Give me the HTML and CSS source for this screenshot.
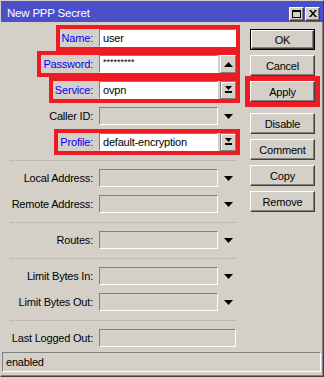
FILE: index.html
```html
<!DOCTYPE html>
<html>
<head>
<meta charset="utf-8">
<link rel="stylesheet" href="styles.css">
</head>
<body>
<div class="window">
  <div class="titlebar">
    <span class="title">New PPP Secret</span>
    <div class="tb-btns">
      <span class="tb-btn"><svg width="9" height="8" viewBox="0 0 9 8"><rect x="0.5" y="0.5" width="8" height="7" fill="none" stroke="#000"/><rect x="0" y="0" width="9" height="2" fill="#000"/></svg></span>
      <span class="tb-btn"><svg width="8" height="7" viewBox="0 0 8 7"><path d="M0 0h2l2 2.5 2-2.5h2l-3 3.5 3 3.5h-2l-2-2.5-2 2.5h-2l3-3.5z" fill="#000"/></svg></span>
    </div>
  </div>
  <div class="main">
    <div class="form">
      <div class="row"><div class="box hl"><span class="lbl blue">Name:</span><div class="input white full">user</div></div></div>
      <div class="row"><div class="box hl"><span class="lbl blue">Password:</span><div class="field"><div class="input white pw">*********</div><span class="sbtn"><svg width="9" height="5" viewBox="0 0 9 5"><polygon points="4.5,0 9,5 0,5" fill="#000"/></svg></span></div></div></div>
      <div class="row"><div class="box hl"><span class="lbl blue">Service:</span><div class="field"><div class="input white">ovpn</div><span class="sbtn dark"><svg width="7" height="8" viewBox="0 0 7 8"><polygon points="0,0 7,0 3.5,4" fill="#000"/><rect x="0" y="5" width="7" height="2" fill="#000"/></svg></span></div></div></div>
      <div class="row"><div class="box"><span class="lbl">Caller ID:</span><div class="field"><div class="input"></div><span class="arrow"><svg width="9" height="5" viewBox="0 0 9 5"><polygon points="0,0 9,0 4.5,5" fill="#000"/></svg></span></div></div></div>
      <div class="row"><div class="box hl"><span class="lbl blue">Profile:</span><div class="field"><div class="input white">default-encryption</div><span class="sbtn dark"><svg width="7" height="8" viewBox="0 0 7 8"><polygon points="0,0 7,0 3.5,4" fill="#000"/><rect x="0" y="5" width="7" height="2" fill="#000"/></svg></span></div></div></div>
      <div class="sep"></div>
      <div class="row"><div class="box"><span class="lbl">Local Address:</span><div class="field"><div class="input"></div><span class="arrow"><svg width="9" height="5" viewBox="0 0 9 5"><polygon points="0,0 9,0 4.5,5" fill="#000"/></svg></span></div></div></div>
      <div class="row"><div class="box"><span class="lbl">Remote Address:</span><div class="field"><div class="input"></div><span class="arrow"><svg width="9" height="5" viewBox="0 0 9 5"><polygon points="0,0 9,0 4.5,5" fill="#000"/></svg></span></div></div></div>
      <div class="sep"></div>
      <div class="row"><div class="box"><span class="lbl">Routes:</span><div class="field"><div class="input"></div><span class="arrow"><svg width="9" height="5" viewBox="0 0 9 5"><polygon points="0,0 9,0 4.5,5" fill="#000"/></svg></span></div></div></div>
      <div class="sep"></div>
      <div class="row"><div class="box"><span class="lbl">Limit Bytes In:</span><div class="field"><div class="input"></div><span class="arrow"><svg width="9" height="5" viewBox="0 0 9 5"><polygon points="0,0 9,0 4.5,5" fill="#000"/></svg></span></div></div></div>
      <div class="row"><div class="box"><span class="lbl">Limit Bytes Out:</span><div class="field"><div class="input"></div><span class="arrow"><svg width="9" height="5" viewBox="0 0 9 5"><polygon points="0,0 9,0 4.5,5" fill="#000"/></svg></span></div></div></div>
      <div class="sep"></div>
      <div class="row"><div class="box"><span class="lbl">Last Logged Out:</span><div class="input full"></div></div></div>
    </div>
    <div class="buttons">
      <div class="default"><button class="btn">OK</button></div>
      <button class="btn">Cancel</button>
      <div class="mark"><button class="btn">Apply</button></div>
      <button class="btn group">Disable</button>
      <button class="btn">Comment</button>
      <button class="btn">Copy</button>
      <button class="btn">Remove</button>
    </div>
  </div>
  <div class="status">enabled</div>
</div>
</body>
</html>
```

FILE: styles.css
```css
html, body {
  margin: 0;
  padding: 0;
  background: #d4d0c8;
}
.window {
  width: 324px;
  height: 377px;
  box-sizing: border-box;
  border: 1px solid;
  border-color: #d4d0c8 #404040 #404040 #d4d0c8;
  box-shadow: inset -1px -1px #808080;
  background: #d4d0c8;
  display: flex;
  flex-direction: column;
  font-family: "Liberation Sans", Arial, sans-serif;
  font-size: 11px;
  letter-spacing: -0.2px;
  color: #000;
}
.titlebar {
  height: 21px;
  flex: none;
  background: #4b4fc8;
  display: flex;
  align-items: center;
  justify-content: space-between;
  padding: 0 3px 0 6px;
}
.title {
  color: #fff;
  font-size: 11.5px;
  padding-top: 3px;
}
.tb-btns {
  display: flex;
  gap: 1px;
  margin-top: 4px;
}
.tb-btn {
  width: 15px;
  height: 14px;
  box-sizing: border-box;
  background: #d4d0c8;
  border: 1px solid;
  border-color: #fff #404040 #404040 #fff;
  box-shadow: inset -1px -1px #808080;
  display: flex;
  align-items: center;
  justify-content: center;
}
.main {
  flex: 1;
  display: flex;
  min-height: 0;
}
.form {
  width: 239px;
  padding-top: 3px;
  display: flex;
  flex-direction: column;
}
.row {
  display: flex;
  justify-content: flex-end;
}
.box {
  height: 26px;
  box-sizing: border-box;
  border: 4px solid transparent;
  padding-left: 2px;
  display: flex;
  align-items: center;
}
.box.hl {
  border-color: #ed1c24;
}
.lbl {
  margin-right: 6px;
  white-space: nowrap;
}
.lbl.blue {
  color: #0000ff;
}
.field {
  width: 137px;
  display: flex;
  gap: 2px;
  align-items: center;
}
.input {
  width: 119px;
  height: 18px;
  box-sizing: border-box;
  border: 1px solid;
  border-color: #808080 #fff #fff #808080;
  padding-left: 3px;
  line-height: 16px;
  white-space: nowrap;
  overflow: hidden;
}
.input.full {
  width: 137px;
}
.input.white {
  background: #fff;
}
.input.pw {
  font-size: 9px;
  line-height: 13px;
  letter-spacing: 0;
}
.sbtn {
  width: 16px;
  height: 18px;
  box-sizing: border-box;
  border: 1px solid;
  border-color: #fff #808080 #808080 #fff;
  display: flex;
  align-items: center;
  justify-content: center;
}
.sbtn.dark {
  border-color: #808080;
  box-shadow: inset 1px 1px #fff;
}
.arrow {
  width: 16px;
  height: 18px;
  display: flex;
  align-items: center;
  justify-content: center;
}
.sep {
  margin: 5px 0 4px 9px;
  width: 225px;
  height: 1px;
  flex: none;
  background: repeating-linear-gradient(90deg, #a8a49c 0 1px, #d4d0c8 1px 2px);
}
.buttons {
  margin-left: 10px;
  padding-top: 7px;
  display: flex;
  flex-direction: column;
  gap: 5px;
  width: 65px;
}
.btn {
  width: 65px;
  height: 21px;
  box-sizing: border-box;
  margin: 0;
  padding: 0;
  font-family: "Liberation Sans", Arial, sans-serif;
  font-size: 11px;
  letter-spacing: -0.2px;
  color: #000;
  background: #d4d0c8;
  border: 1px solid;
  border-color: #fff #404040 #404040 #fff;
  box-shadow: inset -1px -1px #808080;
}
.default {
  border: 1px solid #000;
  height: 21px;
  box-sizing: border-box;
}
.default .btn {
  width: 63px;
  height: 19px;
}
.mark {
  border: 5px solid #ed1c24;
  margin: -5px;
}
.btn.group {
  margin-top: 6px;
}
.status {
  height: 20px;
  flex: none;
  box-sizing: border-box;
  margin: 0 2px 4px 1px;
  border: 1px solid;
  border-color: #808080 #fff #fff #808080;
  padding-left: 3px;
  line-height: 18px;
}
```
